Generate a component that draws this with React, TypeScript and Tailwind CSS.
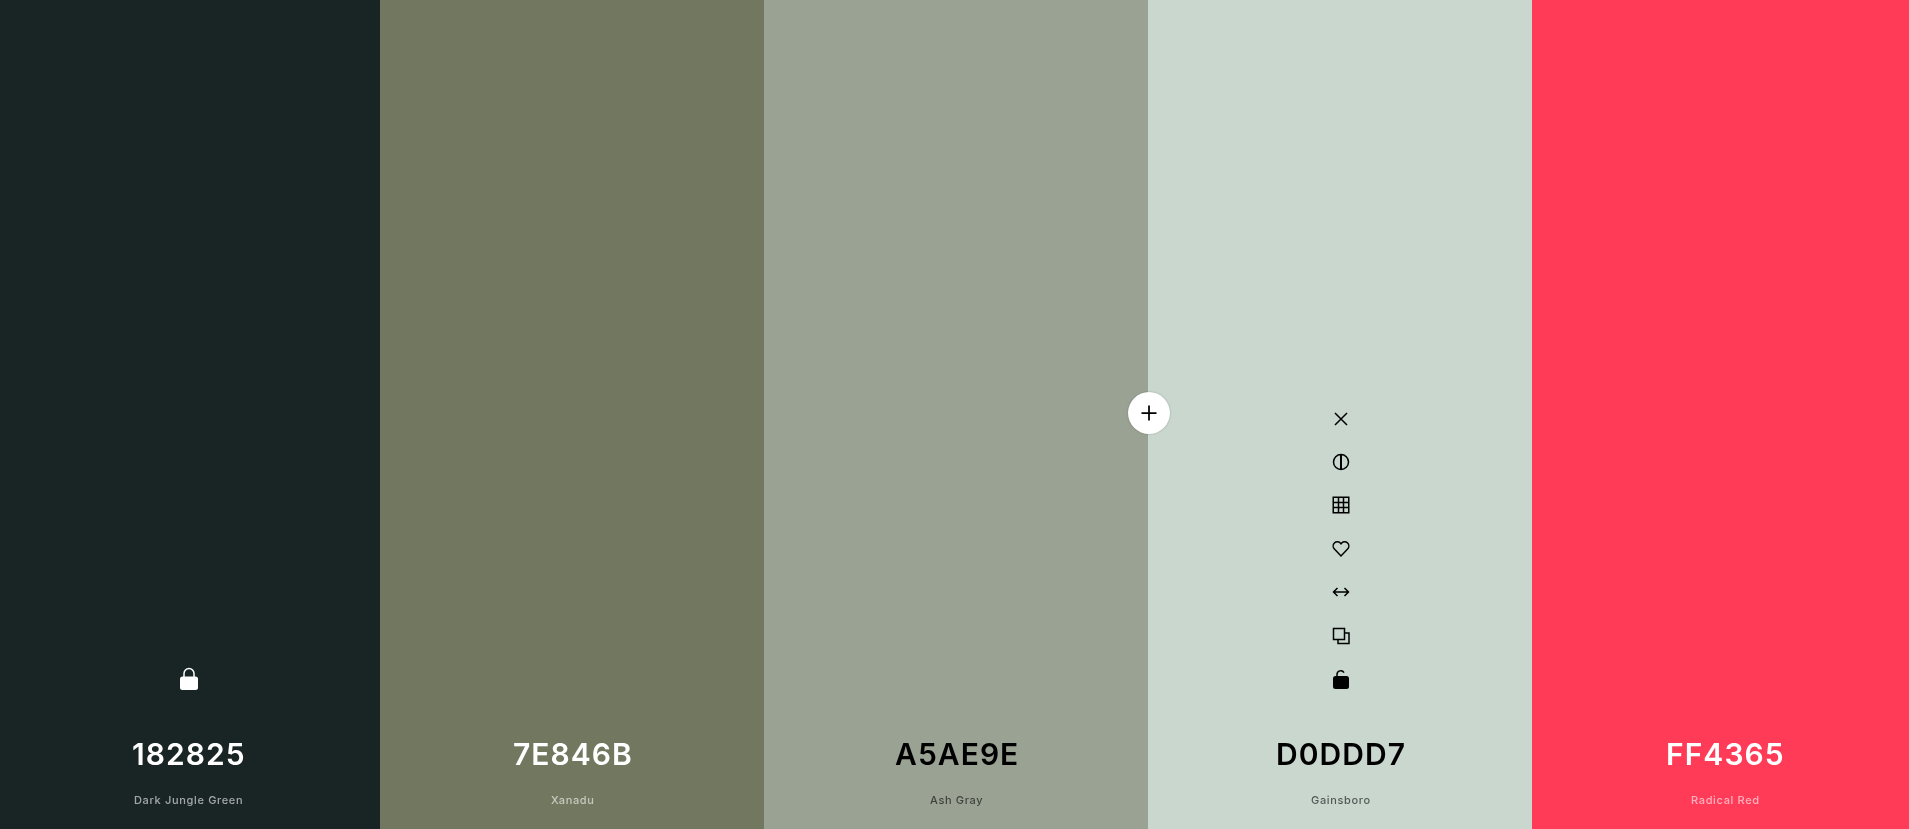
import React from "react";

const ink = "#000000";

function CloseIcon() {
  return (
    <svg width="24" height="24" viewBox="0 0 24 24" fill="none" stroke={ink} strokeWidth="1.5">
      <path d="M6 6l12 12M18 6L6 18" />
    </svg>
  );
}

function ContrastIcon() {
  return (
    <svg width="24" height="24" viewBox="0 0 24 24" fill="none" stroke={ink} strokeWidth="1.5">
      <circle cx="12" cy="12" r="7.5" />
      <path d="M12 4.5v15" strokeWidth="2" />
    </svg>
  );
}

function GridIcon() {
  return (
    <svg width="24" height="24" viewBox="0 0 24 24" fill="none" stroke={ink} strokeWidth="1.5">
      <path d="M4.25 4.25h15.5v15.5H4.25zM9.5 4.5v15M14.5 4.5v15M4.5 9.5h15M4.5 14.5h15" />
    </svg>
  );
}

function HeartIcon() {
  return (
    <svg width="24" height="24" viewBox="0 0 24 24" fill="none" stroke={ink} strokeWidth="1.5">
      <path d="M12 18.9l-6.6-6.8a4.3 4.3 0 0 1 0-6 4.1 4.1 0 0 1 5.9 0l.7.8.7-.8a4.1 4.1 0 0 1 5.9 0 4.3 4.3 0 0 1 0 6z" />
    </svg>
  );
}

function ArrowsIcon() {
  return (
    <svg width="24" height="24" viewBox="0 0 24 24" fill="none" stroke={ink} strokeWidth="1.5">
      <path d="M5 12h14M8.5 8L4.5 12l4 4M15.5 8l4 4-4 4" />
    </svg>
  );
}

function CopyIcon() {
  return (
    <svg width="24" height="24" viewBox="0 0 24 24" fill="none" stroke={ink} strokeWidth="1.5">
      <path d="M4.5 4.5h11v11h-11z" />
      <path d="M15.5 9h4.5v10.5H9V15.5" />
    </svg>
  );
}

function LockIcon({ open, color }: { open?: boolean; color: string }) {
  return (
    <svg width="24" height="24" viewBox="0 0 24 24" fill="none">
      {open ? (
        <>
          <path d="M8 10V7.5a3.75 3.75 0 0 1 7-1.9" stroke={color} strokeWidth="1.5" />
          <rect x="4" y="9" width="16" height="13" rx="2.5" fill={color} />
        </>
      ) : (
        <>
          <path d="M7 11V6.5a5 5 0 0 1 10 0V11" stroke={color} strokeWidth="1.5" />
          <rect x="3" y="9.5" width="18" height="13.5" rx="2.5" fill={color} />
        </>
      )}
    </svg>
  );
}

type Swatch = {
  hex: string;
  name: string;
  bg: string;
  code: string;
  label: string;
  active?: boolean;
};

const swatches: Swatch[] = [
  { hex: "182825", name: "Dark Jungle Green", bg: "bg-[#192524]", code: "text-white", label: "text-white/60" },
  { hex: "7E846B", name: "Xanadu", bg: "bg-[#72785f]", code: "text-white", label: "text-white/60" },
  { hex: "A5AE9E", name: "Ash Gray", bg: "bg-[#9aa293]", code: "text-black", label: "text-black/60" },
  { hex: "D0DDD7", name: "Gainsboro", bg: "bg-[#c9d7cf]", code: "text-black", label: "text-black/60", active: true },
  { hex: "FF4365", name: "Radical Red", bg: "bg-[#ff3b58]", code: "text-white", label: "text-white/60" },
];

function SwatchColumn({ swatch, index }: { swatch: Swatch; index: number }) {
  return (
    <div className={`flex h-full w-[384px] flex-col items-center justify-end pb-[21px] pl-[2px] ${swatch.bg}`}>
      {swatch.active ? (
        <div className="flex flex-col items-center gap-[19.4px]">
          <CloseIcon />
          <ContrastIcon />
          <GridIcon />
          <HeartIcon />
          <ArrowsIcon />
          <CopyIcon />
          <LockIcon open color={ink} />
        </div>
      ) : index === 0 ? (
        <LockIcon color="#ffffff" />
      ) : null}
      <div className={`mt-[43px] text-[30px] leading-[40px] font-semibold tracking-[0.035em] will-change-transform ${swatch.code}`}>
        {swatch.hex}
      </div>
      <div className={`mt-[18px] text-[11px] leading-[16px] font-medium tracking-[0.06em] will-change-transform ${swatch.label}`}>
        {swatch.name}
      </div>
    </div>
  );
}

export default function App() {
  return (
    <div className="relative h-[829px] w-[1909px] overflow-hidden font-['Inter',sans-serif]">
      <div className="-ml-1 flex h-full w-[1920px]">
        {swatches.map((swatch, index) => (
          <SwatchColumn key={swatch.hex} swatch={swatch} index={index} />
        ))}
      </div>
      <button
        type="button"
        className="absolute top-[392px] left-[1128px] flex size-[42px] items-center justify-center rounded-full bg-white shadow-[0_0_2px_rgba(0,0,0,0.25)]"
      >
        <svg width="24" height="24" viewBox="0 0 24 24" fill="none" stroke={ink} strokeWidth="1.75">
          <path d="M12 4.5v15M4.5 12h15" />
        </svg>
      </button>
    </div>
  );
}
